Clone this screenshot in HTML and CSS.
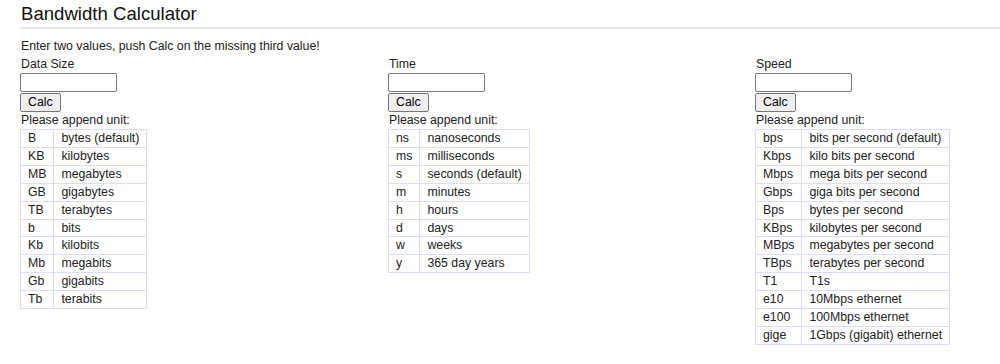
FILE: index.html
```html
<!DOCTYPE html>
<html>
<head>
    <meta charset="UTF-8">
    <title>Bandwidth Calculator</title>
    <link rel="stylesheet" href="styles.css">
</head>
<body>
    <div class="page">
        <h1 class="title">Bandwidth Calculator</h1>
        <p class="intro">Enter two values, push Calc on the missing third value!</p>

        <div class="calc-grid">
            <!-- data size -->
            <div class="calc-col">
                <div class="label">Data Size</div>
                <input type="text" class="calc-input" id="size">
                <button class="calc-btn">Calc</button>
                <div class="label">Please append unit:</div>
                <table class="units">
                    <tr><td>B</td><td>bytes (default)</td></tr>
                    <tr><td>KB</td><td>kilobytes</td></tr>
                    <tr><td>MB</td><td>megabytes</td></tr>
                    <tr><td>GB</td><td>gigabytes</td></tr>
                    <tr><td>TB</td><td>terabytes</td></tr>
                    <tr><td>b</td><td>bits</td></tr>
                    <tr><td>Kb</td><td>kilobits</td></tr>
                    <tr><td>Mb</td><td>megabits</td></tr>
                    <tr><td>Gb</td><td>gigabits</td></tr>
                    <tr><td>Tb</td><td>terabits</td></tr>
                </table>
            </div>

            <!-- time -->
            <div class="calc-col">
                <div class="label">Time</div>
                <input type="text" class="calc-input" id="time">
                <button class="calc-btn">Calc</button>
                <div class="label">Please append unit:</div>
                <table class="units">
                    <tr><td>ns</td><td>nanoseconds</td></tr>
                    <tr><td>ms</td><td>milliseconds</td></tr>
                    <tr><td>s</td><td>seconds (default)</td></tr>
                    <tr><td>m</td><td>minutes</td></tr>
                    <tr><td>h</td><td>hours</td></tr>
                    <tr><td>d</td><td>days</td></tr>
                    <tr><td>w</td><td>weeks</td></tr>
                    <tr><td>y</td><td>365 day years</td></tr>
                </table>
            </div>

            <!-- speed -->
            <div class="calc-col">
                <div class="label">Speed</div>
                <input type="text" class="calc-input" id="speed">
                <button class="calc-btn">Calc</button>
                <div class="label">Please append unit:</div>
                <table class="units">
                    <tr><td>bps</td><td>bits per second (default)</td></tr>
                    <tr><td>Kbps</td><td>kilo bits per second</td></tr>
                    <tr><td>Mbps</td><td>mega bits per second</td></tr>
                    <tr><td>Gbps</td><td>giga bits per second</td></tr>
                    <tr><td>Bps</td><td>bytes per second</td></tr>
                    <tr><td>KBps</td><td>kilobytes per second</td></tr>
                    <tr><td>MBps</td><td>megabytes per second</td></tr>
                    <tr><td>TBps</td><td>terabytes per second</td></tr>
                    <tr><td>T1</td><td>T1s</td></tr>
                    <tr><td>e10</td><td>10Mbps ethernet</td></tr>
                    <tr><td>e100</td><td>100Mbps ethernet</td></tr>
                    <tr><td>gige</td><td>1Gbps (gigabit) ethernet</td></tr>
                </table>
            </div>
        </div>
    </div>
</body>
</html>
```

FILE: styles.css
```css
body {
    margin: 0;
    padding: 0;
    background: #fff;
    color: #222;
    font-family: "Liberation Sans", Arial, sans-serif;
    font-size: 12.3px;
    line-height: 17px;
}

.page {
    padding-left: 20px;
}

.title {
    margin: 0;
    padding: 3px 0 2px 1px;
    font-size: 18.6px;
    font-weight: normal;
    line-height: 22px;
    color: #111;
    border-bottom: 2px solid #e6e6e6;
}

.intro {
    margin: 9px 0 1px 1px;
}

.calc-grid {
    display: grid;
    grid-template-columns: 368px 367px auto;
}

.label {
    padding-left: 1px;
}

.calc-input {
    display: block;
    box-sizing: border-box;
    width: 97px;
    height: 19px;
    margin: 0;
    padding: 0 3px;
    border: 1px solid #767676;
    border-radius: 2px;
    font: inherit;
}

.calc-btn {
    display: block;
    box-sizing: border-box;
    height: 19px;
    margin: 1px 0 0;
    padding: 0 7px;
    border: 1px solid #767676;
    border-radius: 2px;
    background: #efefef;
    color: #000;
    font-family: inherit;
    font-size: 12.3px;
    line-height: 15px;
}

.units {
    border-collapse: collapse;
    color: #222;
}

.units td {
    border: 1px solid #dcdcff;
    padding: 1px 7px;
    line-height: 14.9px;
    white-space: nowrap;
}
```
